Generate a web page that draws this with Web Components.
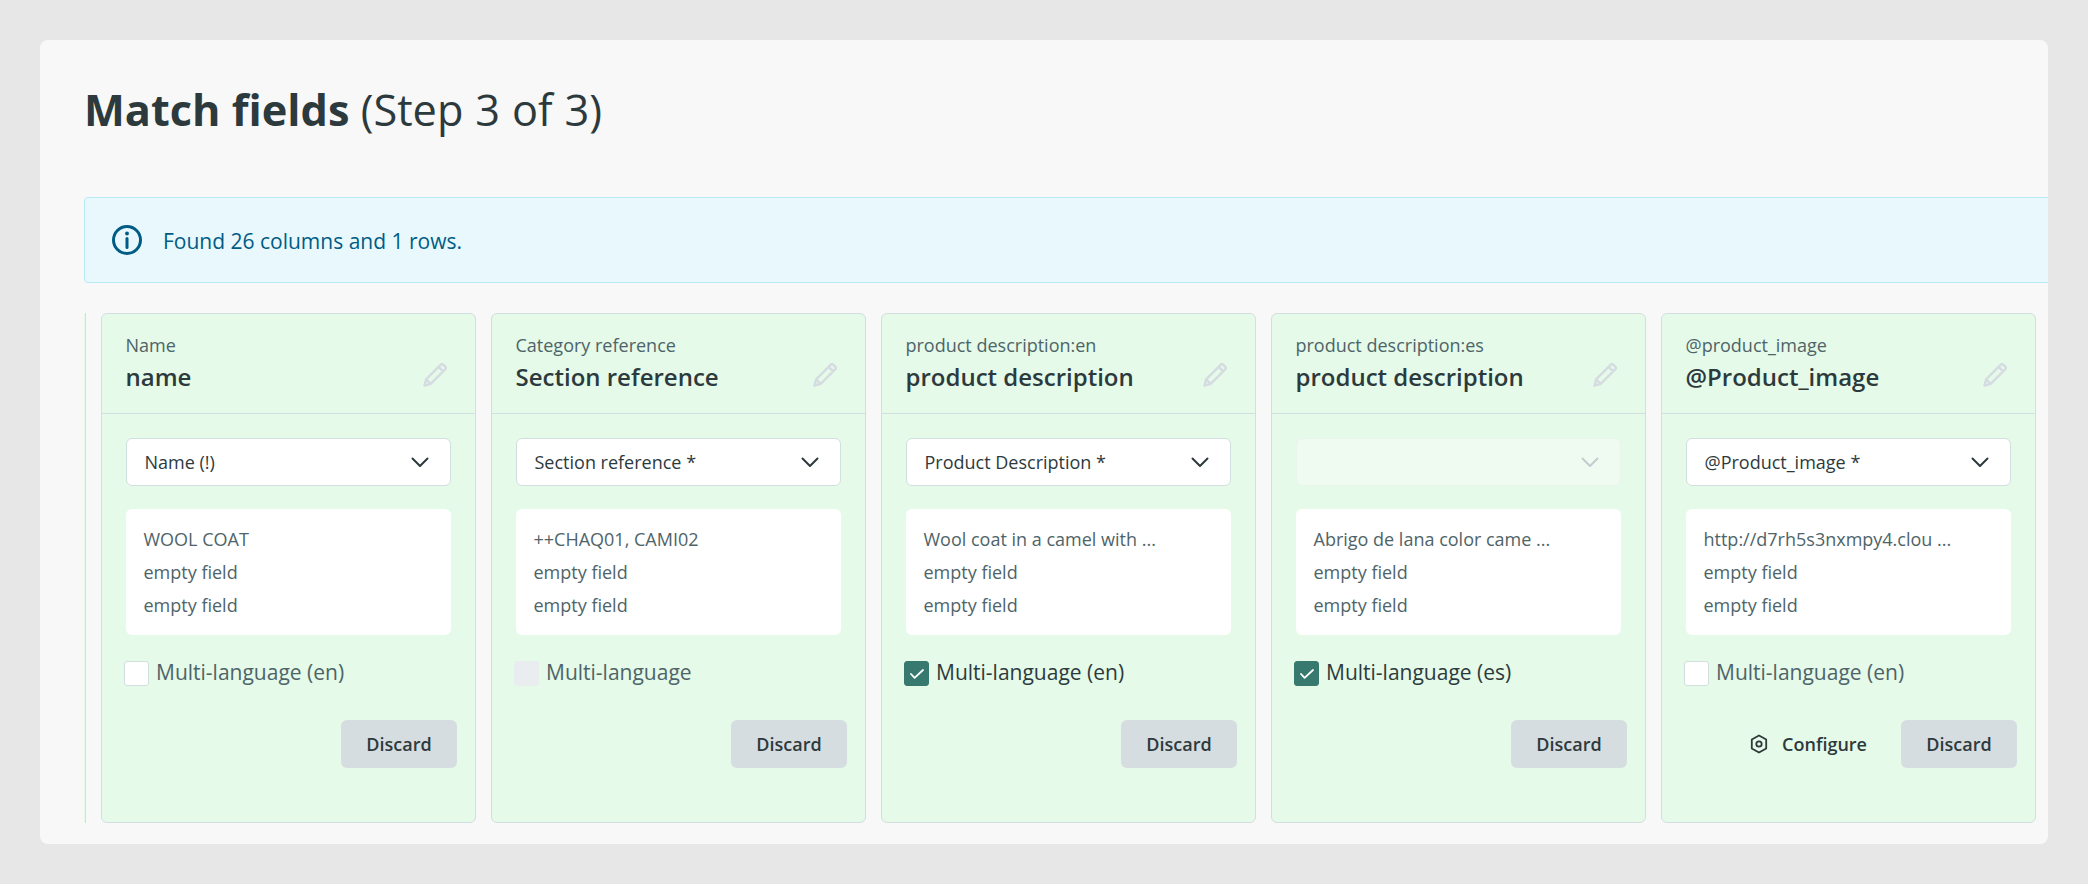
<!DOCTYPE html>
<html lang="en">
<head>
<meta charset="utf-8">
<title>Match fields</title>
<style>
  html, body { margin: 0; height: 100%; background: #e7e7e7; }
  body { font-family: "Open Sans", "Liberation Sans", sans-serif; color: #2d3a3d; overflow: hidden; }
</style>
</head>
<body>
<match-panel>
  <info-alert>Found 26 columns and 1 rows.</info-alert>

  <field-card source="Name" name="name" mapped="Name (!)" lang="Multi-language (en)">
    <div>WOOL COAT</div><div>empty field</div><div>empty field</div>
  </field-card>
  <field-card source="Category reference" name="Section reference" mapped="Section reference *" lang="Multi-language" check="disabled">
    <div>++CHAQ01, CAMI02</div><div>empty field</div><div>empty field</div>
  </field-card>
  <field-card source="product description:en" name="product description" mapped="Product Description *" lang="Multi-language (en)" check="on">
    <div>Wool coat in a camel with ...</div><div>empty field</div><div>empty field</div>
  </field-card>
  <field-card source="product description:es" name="product description" lang="Multi-language (es)" check="on">
    <div>Abrigo de lana color came ...</div><div>empty field</div><div>empty field</div>
  </field-card>
  <field-card source="@product_image" name="@Product_image" mapped="@Product_image *" lang="Multi-language (en)" configure>
    <div>http://d7rh5s3nxmpy4.clou ...</div><div>empty field</div><div>empty field</div>
  </field-card>
</match-panel>

<template id="panel-tpl">
  <style>
    :host { display: block; box-sizing: border-box; margin: 40px; height: 804px; background: #f8f8f8; border-radius: 8px; overflow: hidden; padding: 40px 0 0 44px; }
    h1 { margin: 0 0 57px; font-size: 43.3px; line-height: 60px; font-weight: 400; color: #2d3a3d; }
    h1 b { font-weight: 700; }
    h1 span { word-spacing: 0.7px; }
    .cols { display: flex; gap: 15px; margin-top: 30px; height: 510px; }
    .stub { flex: none; width: 1px; border-right: 1px solid #d2dfe0; background: #e5fae8; }
  </style>
  <h1><b>Match fields</b> <span>(Step 3 of 3)</span></h1>
  <slot name="alert"></slot>
  <div class="cols">
    <div class="stub"></div>
    <slot></slot>
  </div>
</template>

<template id="alert-tpl">
  <style>
    :host { display: flex; align-items: center; box-sizing: border-box; height: 86px; width: calc(100% + 30px); padding-left: 26px; gap: 20px; background: #e8f8fd; border: 1px solid #b5e9f3; border-radius: 4px; color: #005c85; font-size: 21px; }
    svg { flex: none; }
    span { padding-top: 1px; }
  </style>
  <svg width="32" height="32" viewBox="0 0 32 32" fill="none" stroke="#005c85" stroke-width="3"><circle cx="16" cy="16" r="13.5"/><path d="M16 14.5v9" stroke-linecap="round"/><circle cx="16" cy="9.5" r="1.9" fill="#005c85" stroke="none"/></svg>
  <span><slot></slot></span>
</template>

<template id="card-tpl">
  <style>
    :host { display: flex; flex-direction: column; flex: none; box-sizing: border-box; width: 375px; height: 510px; background: #e5fae8; border: 1px solid #d2dfe0; border-radius: 6px; }
    header { position: relative; box-sizing: border-box; height: 100px; padding: 19px 23.5px 0; border-bottom: 1px solid #d2dfe0; }
    .source { font-size: 18px; line-height: 24px; color: #4e6468; }
    .name { margin-top: 3px; font-size: 24px; line-height: 33px; font-weight: 600; color: #2d3a3d; }
    .pencil { position: absolute; right: 28px; top: 49px; }
    .body { padding: 24px 24px 0; }
    .select { display: flex; align-items: center; justify-content: space-between; box-sizing: border-box; height: 48px; padding: 0 21.5px 0 17.5px; background: #fff; border: 1px solid #d2dfe0; border-radius: 6px; font-size: 18px; color: #2d3a3d; }
    .select.empty { background: #effbf1; border-color: #e8f5ea; }
    .data { box-sizing: border-box; height: 126px; margin-top: 23px; padding: 14px 17.5px 0; background: #fff; border-radius: 6px; font-size: 18px; line-height: 33px; color: #4e6468; white-space: nowrap; overflow: hidden; }
    .check { display: flex; gap: 7px; margin: 26px 0 0 -2px; height: 25px; font-size: 21px; line-height: 23px; color: #4e6468; }
    .box { flex: none; display: flex; align-items: center; justify-content: center; box-sizing: border-box; width: 25px; height: 25px; background: #fff; border: 1px solid #d2dfe0; border-radius: 3px; }
    :host([check="disabled"]) .box { background: #e9edf0; border-color: #e9edf0; }
    :host([check="on"]) .box { background: #37796f; border-color: #37796f; }
    :host([check="on"]) .check { color: #2d3a3d; }
    .box svg { display: none; }
    :host([check="on"]) .box svg { display: block; }
    footer { display: flex; justify-content: flex-end; align-items: center; margin: 34px -6px 0 0; gap: 34px; }
    .configure { display: none; align-items: center; gap: 14px; font-size: 18px; font-weight: 600; color: #2d3a3d; }
    :host([configure]) .configure { display: flex; }
    .discard { box-sizing: border-box; width: 116px; height: 48px; line-height: 48px; text-align: center; background: #d6dde1; border-radius: 6px; font-size: 18px; font-weight: 600; color: #2d3a3d; }
  </style>
  <header>
    <div class="source"></div>
    <div class="name"></div>
    <svg class="pencil" width="24" height="24" viewBox="0 0 24 24" fill="none" stroke="#d5dce1" stroke-width="2.4" stroke-linejoin="round"><path d="M1.5 22.5l1.6-6.2L17.8 1.6a1.6 1.6 0 0 1 2.3 0l2.3 2.3a1.6 1.6 0 0 1 0 2.3L7.7 20.9zM3.1 16.3l4.6 4.6M15.6 3.8l4.6 4.6"/></svg>
  </header>
  <div class="body">
    <div class="select">
      <span class="mapped"></span>
      <svg class="chev" width="18" height="11" viewBox="0 0 18 11" fill="none" stroke="#2d3a3d" stroke-width="2" stroke-linecap="round" stroke-linejoin="round"><path d="M1.5 1.5L9 9l7.5-7.5"/></svg>
    </div>
    <div class="data"><slot></slot></div>
    <div class="check">
      <span class="box"><svg width="14" height="10" viewBox="0 0 14 10" fill="none" stroke="#fff" stroke-width="1.8" stroke-linecap="round" stroke-linejoin="round"><path d="M1 5l3.6 3.8L13 1"/></svg></span>
      <span class="lang"></span>
    </div>
    <footer>
      <span class="configure">
        <svg width="18" height="20" viewBox="0 0 20 22" fill="none" stroke="#2d3a3d" stroke-width="2" stroke-linejoin="round"><path d="M10 1.5l8 4.6v9.8l-8 4.6-8-4.6V6.1z"/><circle cx="10" cy="11" r="3"/></svg>
        Configure
      </span>
      <span class="discard">Discard</span>
    </footer>
  </div>
</template>

<script>
class MatchPanel extends HTMLElement {
  constructor() {
    super();
    this.attachShadow({ mode: "open" });
    this.shadowRoot.appendChild(document.getElementById("panel-tpl").content.cloneNode(true));
  }
  connectedCallback() {
    const alert = this.querySelector("info-alert");
    if (alert) alert.slot = "alert";
  }
}

class InfoAlert extends HTMLElement {
  constructor() {
    super();
    this.attachShadow({ mode: "open" });
    this.shadowRoot.appendChild(document.getElementById("alert-tpl").content.cloneNode(true));
  }
}

class FieldCard extends HTMLElement {
  constructor() {
    super();
    this.attachShadow({ mode: "open" });
    this.shadowRoot.appendChild(document.getElementById("card-tpl").content.cloneNode(true));
  }
  connectedCallback() {
    const root = this.shadowRoot;
    root.querySelector(".source").textContent = this.getAttribute("source");
    root.querySelector(".name").textContent = this.getAttribute("name");
    root.querySelector(".lang").textContent = this.getAttribute("lang");
    const mapped = this.getAttribute("mapped");
    root.querySelector(".mapped").textContent = mapped || "";
    if (!mapped) {
      root.querySelector(".select").classList.add("empty");
      root.querySelector(".chev").setAttribute("stroke", "#c3ccce");
    }
  }
}

customElements.define("match-panel", MatchPanel);
customElements.define("info-alert", InfoAlert);
customElements.define("field-card", FieldCard);
</script>
</body>
</html>
